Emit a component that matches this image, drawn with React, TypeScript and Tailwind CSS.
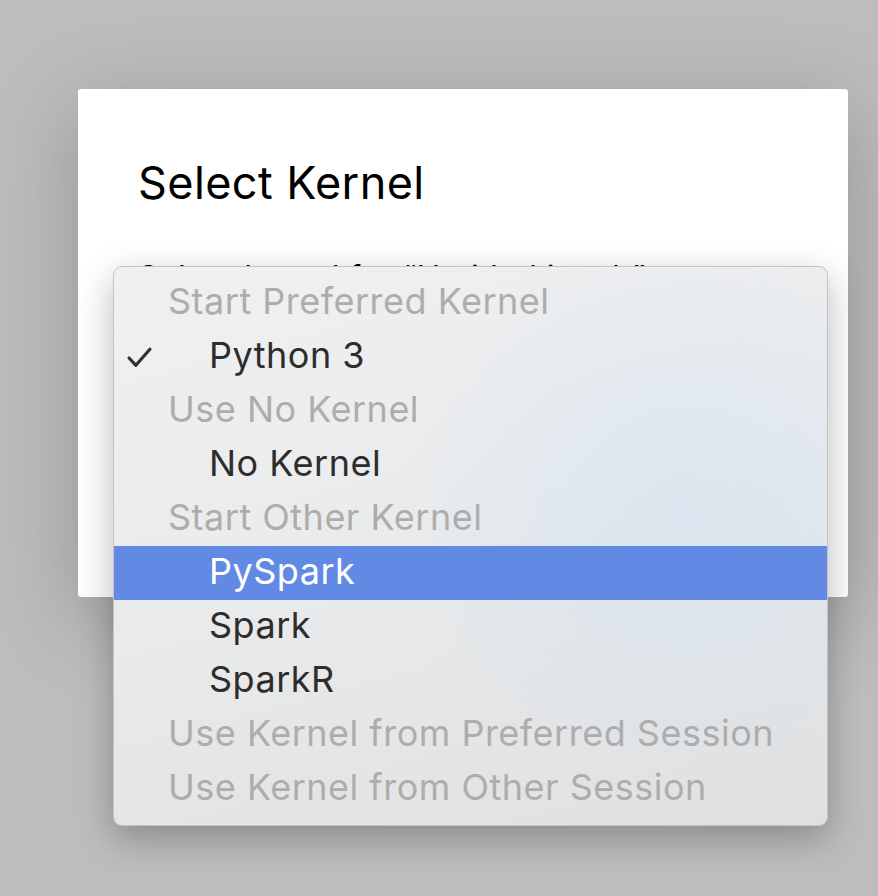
type Item = {
  label: string;
  kind: 'header' | 'item';
  checked?: boolean;
  active?: boolean;
};

const items: Item[] = [
  { label: 'Start Preferred Kernel', kind: 'header' },
  { label: 'Python 3', kind: 'item', checked: true },
  { label: 'Use No Kernel', kind: 'header' },
  { label: 'No Kernel', kind: 'item' },
  { label: 'Start Other Kernel', kind: 'header' },
  { label: 'PySpark', kind: 'item', active: true },
  { label: 'Spark', kind: 'item' },
  { label: 'SparkR', kind: 'item' },
  { label: 'Use Kernel from Preferred Session', kind: 'header' },
  { label: 'Use Kernel from Other Session', kind: 'header' },
];

function Check() {
  return (
    <svg className="w-[25px] h-[21px]" viewBox="0 0 24 20" fill="none">
      <path
        d="M2 10.5 L8.5 17.5 L22 2"
        stroke="#2f2f2f"
        strokeWidth={3}
        strokeLinecap="round"
        strokeLinejoin="round"
      />
    </svg>
  );
}

function KernelMenu() {
  return (
    <div className="absolute left-[35px] top-[177px] w-[715px] h-[560px] rounded-[9px] border border-[#c4c4c4] bg-[linear-gradient(165deg,#f0f0f1_0%,#eaebec_45%,#e0e0e0_100%)] shadow-[0_12px_36px_rgba(0,0,0,0.28)] overflow-hidden z-10">
      <div className="absolute inset-0 bg-[radial-gradient(circle_at_80%_45%,rgba(200,225,245,0.45),rgba(200,225,245,0)_45%)]" />
      <div className="relative flex flex-col pt-[9px] tracking-[0.5px]">
        {items.map((it) => (
          <div
            key={it.label}
            className={`flex items-center h-[54px] text-[36px] leading-[48px] ${
              it.active ? 'bg-[#628ae5] text-white' : ''
            }`}
          >
            {it.kind === 'header' ? (
              <span className="pl-[54px] pb-[5px] text-[#adadad]">{it.label}</span>
            ) : (
              <>
                <span className="w-[95px] pl-[13px] flex items-center shrink-0">
                  {it.checked && <Check />}
                </span>
                <span
                  className={`pb-[5px] ${it.active ? 'text-white' : 'text-[#2d2d2d]'}`}
                >
                  {it.label}
                </span>
              </>
            )}
          </div>
        ))}
      </div>
    </div>
  );
}

export default function App() {
  return (
    <div
      className="w-[878px] h-[896px] overflow-hidden bg-[#bdbdbd] pt-[89px] pl-[78px]"
      style={{ fontFamily: 'Inter, "Liberation Sans", sans-serif' }}
    >
      <div className="relative w-[770px] h-[508px] bg-white rounded-[3px] shadow-[0_20px_90px_rgba(0,0,0,0.22)]">
        <div className="pl-[60px] pt-[66px]">
          <h1 className="text-[45px] leading-[56px] tracking-[0.4px] text-black">
            Select Kernel
          </h1>
          <p className="mt-[47px] text-[32px] leading-[40px] tracking-[0.4px] text-black">
            Select kernel for “Untitled.ipynb”
          </p>
        </div>
        <KernelMenu />
      </div>
    </div>
  );
}
